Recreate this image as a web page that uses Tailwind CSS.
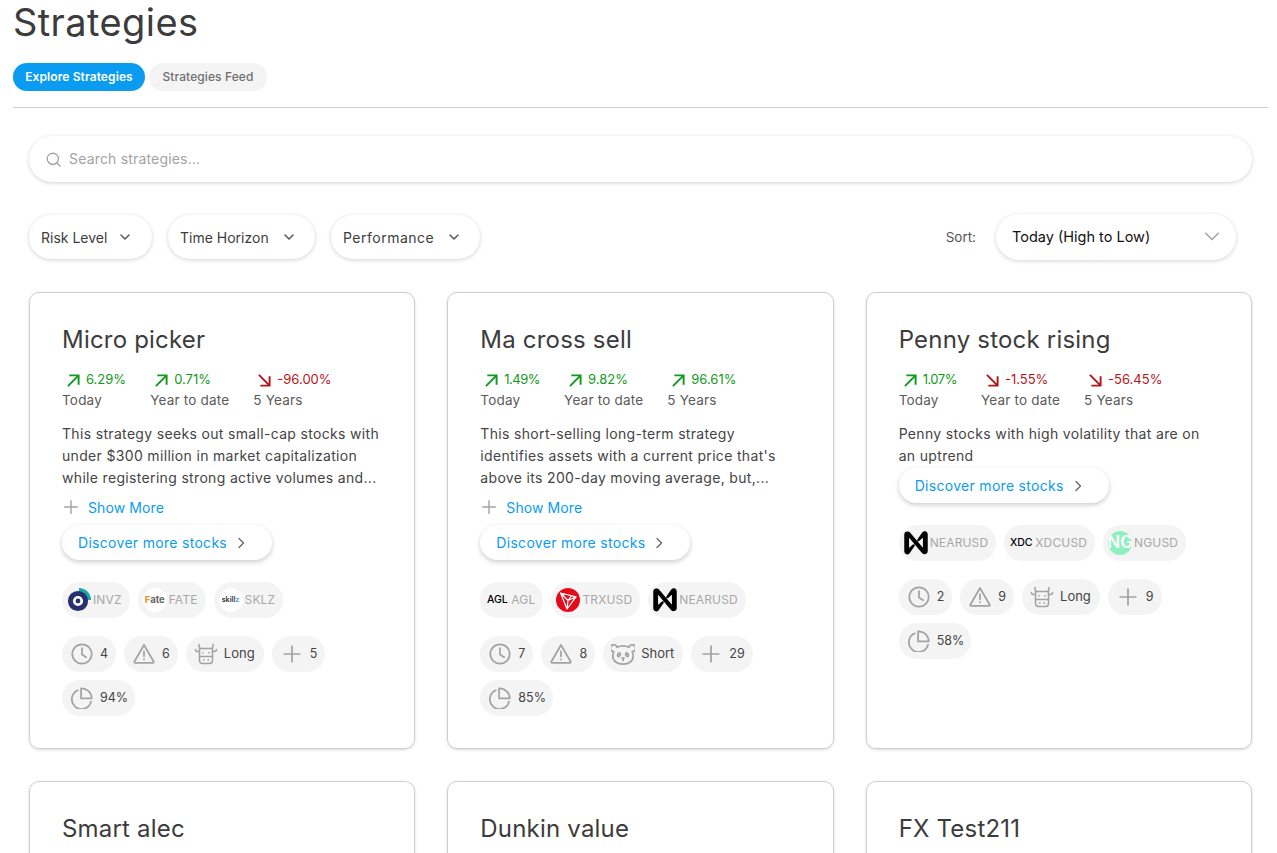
<!DOCTYPE html>
<html lang="en">
<head>
    <meta charset="UTF-8">
    <meta name="viewport" content="width=device-width, initial-scale=1.0">
    <title>Strategies</title>
    <script src="https://cdn.jsdelivr.net/npm/@tailwindcss/browser@4"></script>
</head>
<body class="bg-white text-[#3c3c3c] font-['Inter',sans-serif] h-[853px] overflow-hidden">

    <!-- shared icons -->
    <svg class="hidden">
        <symbol id="clock" viewBox="0 0 24 24" fill="none" stroke="#a3a3a3" stroke-width="1.9" stroke-linecap="round" stroke-linejoin="round"><circle cx="12" cy="12" r="10.6"/><path d="M12 5.5V12.5L16.5 15.5"/></symbol>
        <symbol id="warn" viewBox="0 0 24 24" fill="none" stroke="#a3a3a3" stroke-width="1.9" stroke-linecap="round" stroke-linejoin="round"><path d="M12 2.2L22.6 20.4A.8.8 0 0 1 22 21.6H2A.8.8 0 0 1 1.4 20.4Z"/><path d="M12 9V14.5M12 17.6V18"/></symbol>
        <symbol id="plus" viewBox="0 0 24 24" fill="none" stroke="#a3a3a3" stroke-width="1.9" stroke-linecap="round"><path d="M12 3.5V20.5M3.5 12H20.5"/></symbol>
        <symbol id="pie" viewBox="0 0 24 24" fill="none" stroke="#a3a3a3" stroke-width="1.9" stroke-linecap="round" stroke-linejoin="round"><path d="M7.5 3.6A10.6 10.6 0 1 0 21.8 16"/><path d="M11 1.4A11 11 0 0 1 22.6 12.5H11Z"/></symbol>
        <symbol id="cow" viewBox="0 0 24 24" fill="none" stroke="#a3a3a3" stroke-width="1.5" stroke-linecap="round" stroke-linejoin="round"><path d="M6.5 6.5C5 5.5 4.6 4 5 2.5M17.5 6.5C19 5.5 19.4 4 19 2.5"/><path d="M5.5 6.5H18.5V18.5A3 3 0 0 1 15.5 21.5H8.5A3 3 0 0 1 5.5 18.5Z"/><path d="M5.5 9.5H3.5A2 2 0 0 1 1.5 7.5M18.5 9.5H20.5A2 2 0 0 0 22.5 7.5"/><path d="M5.5 14.5H18.5"/><path d="M9 10.5V11M15 10.5V11M9.5 18H10M14 18H14.5"/></symbol>
        <symbol id="panda" viewBox="0 0 24 24" fill="none" stroke="#a3a3a3" stroke-width="1.7" stroke-linecap="round" stroke-linejoin="round"><path d="M6 5.2A3.4 3.4 0 1 0 2.8 9.6C2 11 1.8 12.5 1.8 14C1.8 19 6 22.2 12 22.2S22.2 19 22.2 14C22.2 12.5 22 11 21.2 9.6A3.4 3.4 0 1 0 18 5.2C16.2 4.2 14.2 3.8 12 3.8S7.8 4.2 6 5.2Z"/><path d="M8 11C6.8 12 6.3 13.4 6.8 14.2C7.5 15 9 14 9.3 12.6C9.5 11.4 8.8 10.6 8 11ZM16 11C17.2 12 17.7 13.4 17.2 14.2C16.5 15 15 14 14.7 12.6C14.5 11.4 15.2 10.6 16 11Z"/><path d="M11 16H13L12 17.2ZM12 17.2V18.4"/></symbol>
        <symbol id="near" viewBox="-1 -1 26 26"><path fill="#000" stroke="#000" stroke-width="1.4" stroke-linejoin="round" d="M19.1 1.3L14.1 8.6C13.7 9.1 14.4 9.7 14.9 9.3L19.8 5C20 4.9 20.2 5 20.2 5.2V18.6C20.2 18.8 20 18.9 19.9 18.7L5 1.1C4.5.5 3.8.2 3 .2H2.6A2.6 2.6 0 0 0 0 2.8V21A2.6 2.6 0 0 0 4.9 22.3L9.9 14.9C10.3 14.4 9.6 13.8 9.1 14.2L4.2 18.5C4 18.6 3.8 18.5 3.8 18.3V5C3.8 4.8 4 4.7 4.2 4.9L19 22.5C19.5 23.1 20.2 23.4 21 23.4H21.4A2.6 2.6 0 0 0 24 20.8V2.6A2.6 2.6 0 0 0 19.1 1.3Z"/></symbol>
        <symbol id="trx" viewBox="0 0 24 24"><circle cx="12" cy="12" r="12" fill="#e60a19"/><path d="M4.5 5L20 8.8L11 21ZM4.5 5L12 12.5L11 21M12 12.5L20 8.8M15.5 7.7L12 12.5" fill="none" stroke="#fff" stroke-width="1.2" stroke-linejoin="round"/></symbol>
        <symbol id="invz" viewBox="0 0 24 24"><path d="M12 0A12 12 0 0 1 24 12L18 12C18 9 15.5 6 12 5.5Z" fill="#1aa9a9"/><circle cx="11" cy="13" r="8" fill="#fff"/><circle cx="11" cy="13" r="7.6" fill="none" stroke="#28306f" stroke-width="5"/><circle cx="11" cy="13" r="2.4" fill="#28306f"/></symbol>
        <symbol id="arrow-up" viewBox="0 0 14 14" fill="none" stroke-width="2.1"><path d="M1 13L12.5 1.5M2.5 1.5H12.5V11.5"/></symbol>
        <symbol id="arrow-down" viewBox="0 0 14 14" fill="none" stroke-width="2.1"><path d="M1 1L12.5 12.5M2.5 12.5H12.5V2.5"/></symbol>
        <symbol id="chev" viewBox="0 0 12 8" fill="none" stroke="#555" stroke-width="1.5" stroke-linecap="round" stroke-linejoin="round"><path d="M2 2L6 6L10 2"/></symbol>
    </svg>

    <div class="pl-[13px] pr-[9px]">
        <h1 class="text-[38px] leading-[44px] tracking-[.4px] text-[#3c3c3c]">Strategies</h1>
        <div class="flex gap-1 mt-[19px]">
            <button class="h-7 w-[132px] rounded-full bg-[#0a9cf0] text-white text-[12px] tracking-[.1px] font-semibold">Explore Strategies</button>
            <button class="h-7 w-[118px] rounded-full bg-[#f4f4f4] text-[#6f6f6f] text-[12px] tracking-[.1px] font-medium">Strategies Feed</button>
        </div>
        <hr class="mt-4 border-[#cfcfcf]">
    </div>

    <div class="pl-[29px] pr-[25px]">
        <div class="mt-[28px] h-[46px] rounded-full bg-white shadow-[0_1px_4px_rgba(0,0,0,.18)] flex items-center pl-[17px] gap-[8px]">
            <svg class="w-[15px] h-[15px]" viewBox="0 0 16 16" fill="none" stroke="#a3a3a3" stroke-width="1.4" stroke-linecap="round"><circle cx="7.3" cy="7.3" r="6"/><path d="M11.8 11.8L15 15"/></svg>
            <span class="mb-[2px] text-[14px] tracking-[.18px] text-[#a3a3a3]">Search strategies...</span>
        </div>

        <div class="mt-[32px] flex items-center">
            <button class="h-11 w-[123px] rounded-full shadow-[0_1px_4px_rgba(0,0,0,.18)] flex items-center justify-between pl-3 pr-[21px] text-[14px]">Risk Level<svg class="w-3 h-2"><use href="#chev"/></svg></button>
            <button class="h-11 w-[147px] ml-[16px] rounded-full shadow-[0_1px_4px_rgba(0,0,0,.18)] flex items-center justify-between pl-3 pr-[20px] text-[14px]">Time Horizon<svg class="w-3 h-2"><use href="#chev"/></svg></button>
            <button class="h-11 w-[149px] ml-[16px] rounded-full shadow-[0_1px_4px_rgba(0,0,0,.18)] flex items-center justify-between pl-3 pr-[20px] text-[14px] tracking-[.5px]">Performance<svg class="w-3 h-2"><use href="#chev"/></svg></button>
            <span class="ml-auto text-[13.5px] text-[#555]">Sort:</span>
            <button class="h-[46px] w-[240px] ml-[20px] mr-[16px] rounded-full shadow-[0_1px_4px_rgba(0,0,0,.18)] flex items-center justify-between pl-4 pr-[16px] text-[14.5px] text-[#111]">Today (High to Low)<svg class="w-[16px] h-[10px]" viewBox="0 0 12 8" fill="none" stroke="#a8a8a8" stroke-width="1.4" stroke-linecap="round" stroke-linejoin="round"><path d="M1 1L6 6L11 1"/></svg></button>
        </div>

        <div id="cards" class="mt-[32px] grid grid-cols-3 gap-x-[32px] gap-y-[32px]"></div>
    </div>

    <script>
        const ticker = (logo, name) => `<span class="h-9 rounded-full bg-[#f4f4f4] flex items-center pl-[5px] pr-[8px] gap-[2px] text-[12px] tracking-[.15px] text-[#a8a8a8]">${logo}<span>${name}</span></span>`;
        const logos = {
            INVZ: '<svg class="w-6 h-6"><use href="#invz"/></svg>',
            FATE: '<span class="w-6 h-6 rounded-full bg-white flex items-center justify-center text-[9.5px] tracking-normal font-bold text-[#666]"><span class="text-[#e8922a]">F</span>ate</span>',
            SKLZ: '<span class="w-6 h-6 rounded-full bg-white flex items-center justify-center text-[7px] tracking-normal font-bold text-[#444]">skill<span class="text-[#4a9be8]">z</span></span>',
            AGL: '<span class="w-6 h-6 flex items-center justify-center text-[10.5px] tracking-normal font-medium text-black">AGL</span>',
            TRX: '<svg class="w-6 h-6"><use href="#trx"/></svg>',
            NEAR: '<svg class="w-6 h-6"><use href="#near"/></svg>',
            XDC: '<span class="w-6 h-6 flex items-center justify-center text-[10.5px] tracking-normal font-medium text-black">XDC</span>',
            NG: '<span class="w-6 h-6 rounded-full overflow-hidden bg-[#8ff0bf] flex items-center justify-center text-[17px] tracking-normal font-semibold text-white whitespace-nowrap">NG</span>',
        };
        const chip = (icon, text) => {
            const big = icon === 'cow' || icon === 'panda';
            return `<span class="h-9 rounded-full bg-[#f4f4f4] flex items-center ${big ? 'pl-[8px] pr-[9px] gap-[6px] text-[13px]' : icon === 'pie' ? 'pl-[9px] pr-[7px] gap-[7px] text-[12.5px]' : 'pl-[9px] pr-[8px] gap-[7px] text-[12.5px]'} text-[#444]"><svg class="${big ? 'w-6 h-6' : 'w-[22px] h-[22px]'}"><use href="#${icon}"/></svg>${text}</span>`;
        };
        const stat = (value, label) => {
            const up = !value.startsWith('-');
            // the "1" runs narrow in the original face
            const narrow = value.startsWith('1') ? 'tracking-[-.5px]' : '';
            return `<div><div class="flex items-center gap-[6px] pl-[5px] h-[20px] text-[13px] ${narrow} ${up ? 'text-[#109a20]' : 'text-[#b5161b]'}"><svg class="w-[13px] h-[13px] ${up ? 'stroke-[#109a20]' : 'stroke-[#b5161b]'}"><use href="#${up ? 'arrow-up' : 'arrow-down'}"/></svg>${value}</div><div class="text-[13.5px] tracking-[.2px] leading-[21px] text-[#5a5a5a] whitespace-nowrap">${label}</div></div>`;
        };

        const strategies = [
            {
                name: 'Micro picker', stats: ['6.29%', '0.71%', '-96.00%'],
                desc: ['This strategy seeks out small-cap stocks with', 'under $300 million in market capitalization', 'while registering strong active volumes and...'],
                more: true,
                tickers: [['INVZ', 'INVZ'], ['FATE', 'FATE'], ['SKLZ', 'SKLZ']],
                chips: [['clock', '4'], ['warn', '6'], ['cow', 'Long'], ['plus', '5'], ['pie', '94%']],
            },
            {
                name: 'Ma cross sell', stats: ['1.49%', '9.82%', '96.61%'],
                desc: ['This short-selling long-term strategy', "identifies assets with a current price that's", 'above its 200-day moving average, but,...'],
                more: true,
                tickers: [['AGL', 'AGL'], ['TRX', 'TRXUSD'], ['NEAR', 'NEARUSD']],
                chips: [['clock', '7'], ['warn', '8'], ['panda', 'Short'], ['plus', '29'], ['pie', '85%']],
            },
            {
                name: 'Penny stock rising', stats: ['1.07%', '-1.55%', '-56.45%'],
                desc: ['Penny stocks with high volatility that are on', 'an uptrend'],
                more: false,
                tickers: [['NEAR', 'NEARUSD'], ['XDC', 'XDCUSD'], ['NG', 'NGUSD']],
                chips: [['clock', '2'], ['warn', '9'], ['cow', 'Long'], ['plus', '9'], ['pie', '58%']],
            },
        ];

        const cardsEl = document.getElementById('cards');
        let html = '';
        for (const s of strategies) {
            html += `<div class="h-[457px] rounded-[10px] border border-[#cfcfcf] shadow-[0_1px_3px_rgba(0,0,0,.15)] pl-[32px] pr-[20px] pt-[29px]">
                <h2 class="text-[24px] leading-[36px] tracking-[.2px]">${s.name}</h2>
                <div class="flex gap-6 mt-[12px]">${stat(s.stats[0], 'Today')}${stat(s.stats[1], 'Year to date')}${stat(s.stats[2], '5 Years')}</div>
                <p class="mt-[12px] text-[14px] tracking-[.33px] leading-[22px] text-[#444] whitespace-nowrap">${s.desc.join('<br>')}</p>
                ${s.more ? '<div class="mt-[7px] h-[22px] flex items-center gap-[8px] text-[14px] tracking-[.1px] text-[#0a9cf0]"><svg class="w-[18px] h-[18px]"><use href="#plus"/></svg>Show More</div>' : ''}
                <div class="${s.more ? 'mt-[7px]' : 'mt-[1px]'} h-[35px] w-[210px] rounded-full bg-white shadow-[0_2px_5px_rgba(0,0,0,.2)] flex items-center pl-4 gap-[10px] text-[14px] tracking-[.3px] text-[#0a9cf0]">Discover more stocks<svg class="w-[8px] h-[12px]" viewBox="0 0 8 12" fill="none" stroke="#666" stroke-width="1.3" stroke-linecap="round" stroke-linejoin="round"><path d="M2 1.5L6.5 6L2 10.5"/></svg></div>
                <div class="mt-[22px] flex gap-2">${s.tickers.map(t => ticker(logos[t[0]], t[1])).join('')}</div>
                <div class="mt-[18px] flex flex-wrap gap-2">${s.chips.map(c => chip(c[0], c[1])).join('')}</div>
            </div>`;
        }
        for (const name of ['Smart alec', 'Dunkin value', 'FX Test211']) {
            html += `<div class="h-[457px] rounded-[10px] border border-[#cfcfcf] shadow-[0_1px_3px_rgba(0,0,0,.15)] pl-[32px] pt-[29px]"><h2 class="text-[24px] leading-[36px] tracking-[.2px]">${name}</h2></div>`;
        }
        cardsEl.innerHTML = html;
    </script>
</body>
</html>
